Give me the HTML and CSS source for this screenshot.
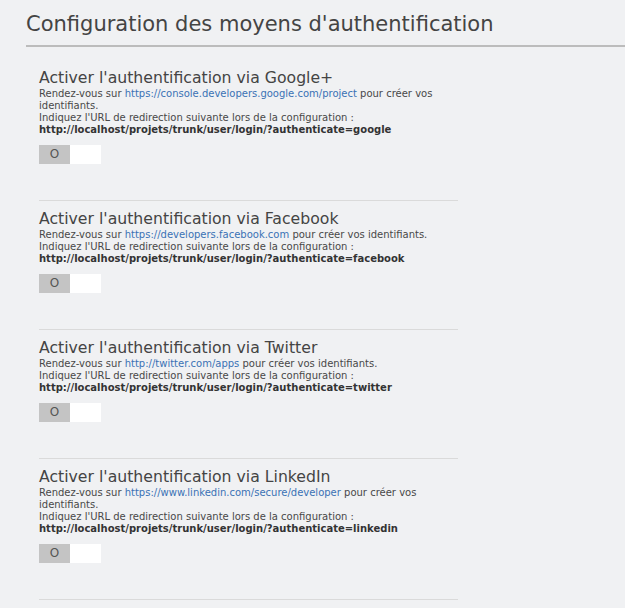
FILE: index.html
```html
<!DOCTYPE html>
<html lang="fr">
<head>
<meta charset="utf-8">
<title>Configuration des moyens d'authentification</title>
<link rel="stylesheet" href="styles.css">
</head>
<body>
<div class="page">
  <h1 class="page-title">Configuration des moyens d'authentification</h1>
  <div class="providers">
    <section class="provider">
      <h2 class="provider-title">Activer l'authentification via Google+</h2>
      <p class="provider-text">Rendez-vous sur <a href="#">https://console.developers.google.com/project</a> pour créer vos identifiants.<br>
      Indiquez l'URL de redirection suivante lors de la configuration :<br>
      <strong>http://localhost/projets/trunk/user/login/?authenticate=google</strong></p>
      <div class="toggle"><span class="toggle-off">O</span><span class="toggle-on"></span></div>
    </section>
    <section class="provider">
      <h2 class="provider-title">Activer l'authentification via Facebook</h2>
      <p class="provider-text">Rendez-vous sur <a href="#">https://developers.facebook.com</a> pour créer vos identifiants.<br>
      Indiquez l'URL de redirection suivante lors de la configuration :<br>
      <strong>http://localhost/projets/trunk/user/login/?authenticate=facebook</strong></p>
      <div class="toggle"><span class="toggle-off">O</span><span class="toggle-on"></span></div>
    </section>
    <section class="provider">
      <h2 class="provider-title">Activer l'authentification via Twitter</h2>
      <p class="provider-text">Rendez-vous sur <a href="#">http://twitter.com/apps</a> pour créer vos identifiants.<br>
      Indiquez l'URL de redirection suivante lors de la configuration :<br>
      <strong>http://localhost/projets/trunk/user/login/?authenticate=twitter</strong></p>
      <div class="toggle"><span class="toggle-off">O</span><span class="toggle-on"></span></div>
    </section>
    <section class="provider">
      <h2 class="provider-title">Activer l'authentification via LinkedIn</h2>
      <p class="provider-text">Rendez-vous sur <a href="#">https://www.linkedin.com/secure/developer</a> pour créer vos identifiants.<br>
      Indiquez l'URL de redirection suivante lors de la configuration :<br>
      <strong>http://localhost/projets/trunk/user/login/?authenticate=linkedin</strong></p>
      <div class="toggle"><span class="toggle-off">O</span><span class="toggle-on"></span></div>
    </section>
  </div>
</div>
</body>
</html>
```

FILE: styles.css
```css
* { box-sizing: border-box; }
html, body {
  margin: 0;
  padding: 0;
  background: #f0f1f3;
  font-family: "DejaVu Sans", Verdana, sans-serif;
  color: #444;
}
.page {
  padding: 10px 0 0 26px;
}
.page-title {
  margin: 0;
  font-size: 21px;
  font-weight: normal;
  line-height: 28px;
  color: #444;
  padding-bottom: 7px;
  border-bottom: 2px solid #bcbcbc;
}
.providers {
  padding-left: 13px;
  padding-top: 13px;
}
.provider {
  width: 419px;
  padding: 8px 0 36px;
  border-bottom: 1px solid #dadada;
}
.provider-title {
  margin: 0;
  font-size: 15.7px;
  font-weight: normal;
  line-height: 20px;
  color: #444;
}
.provider-text {
  margin: 0;
  font-size: 10px;
  line-height: 12px;
  color: #484848;
}
.provider-text a {
  color: #3a72b5;
  text-decoration: none;
}
.provider-text strong {
  color: #333;
}
.toggle {
  display: flex;
  margin-top: 9px;
  width: 62px;
  height: 19px;
}
.toggle-off {
  width: 31px;
  background: #c4c4c4;
  color: #555;
  font-size: 12px;
  line-height: 19px;
  text-align: center;
}
.toggle-on {
  width: 31px;
  background: #fff;
}
```
